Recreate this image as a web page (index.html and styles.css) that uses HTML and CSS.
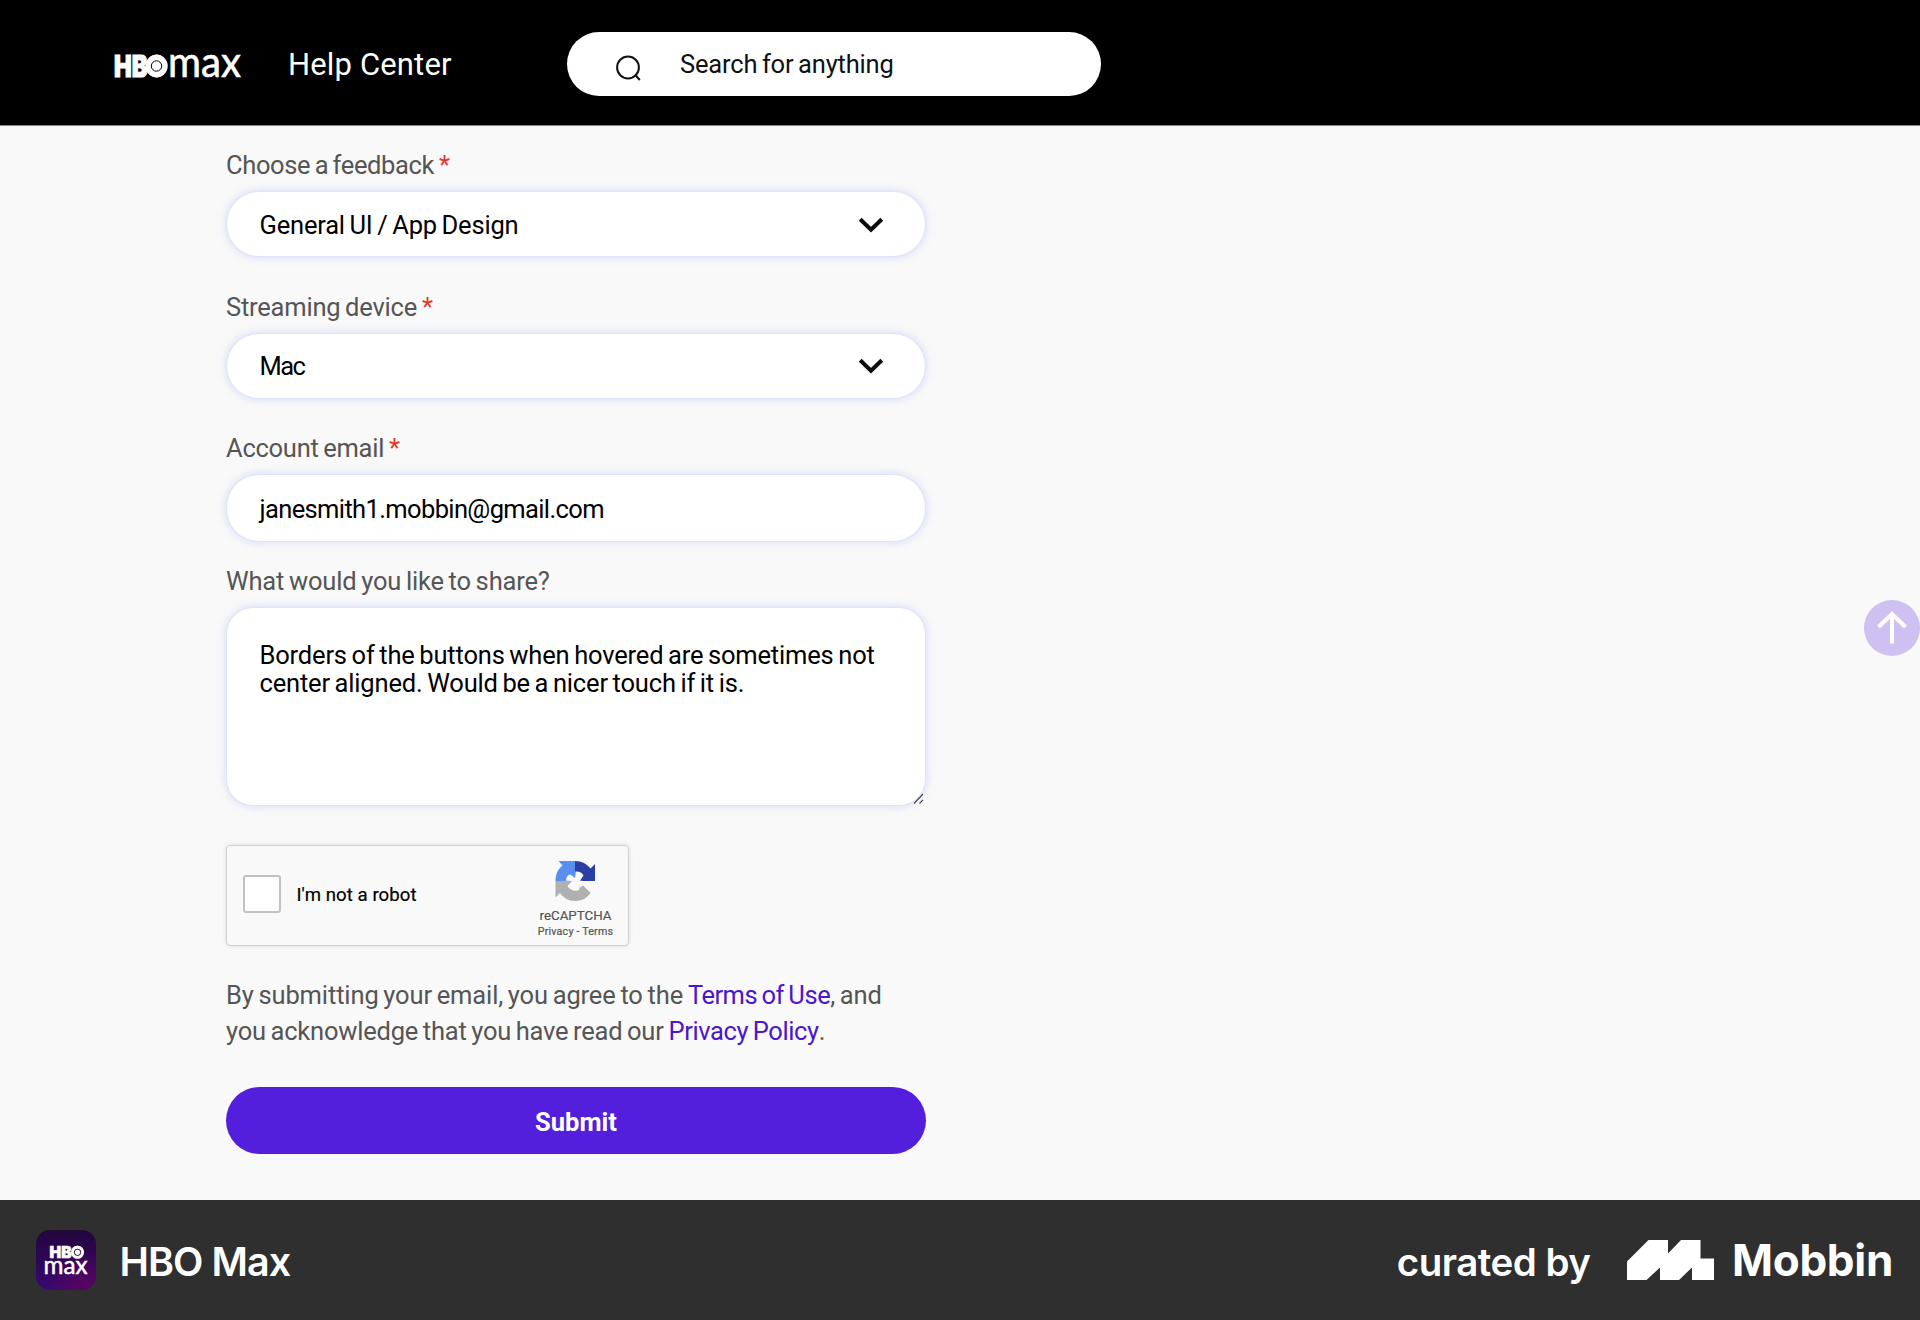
FILE: index.html
```html
<!DOCTYPE html>
<html lang="en">
<head>
<meta charset="utf-8">
<title>Help Center</title>
<link rel="stylesheet" href="styles.css">
</head>
<body>
<header class="header">
  <svg class="brand" viewBox="0 0 130 24" role="img" aria-label="HBO Max">
    <text class="brand-hbo" x="0" y="22.6" textLength="52" lengthAdjust="spacingAndGlyphs">HBO</text>
    <circle cx="42.5" cy="12" r="11.2" fill="#fff"/>
    <circle cx="42.5" cy="12" r="5.2" fill="none" stroke="#000" stroke-width="1"/>
    <text class="brand-max" x="54" y="22.6" textLength="73" lengthAdjust="spacingAndGlyphs">max</text>
  </svg>
  <span class="title">Help Center</span>
  <div class="search">
    <svg class="search-icon" viewBox="0 0 28 28"><circle cx="13" cy="12.5" r="10.9"/><path d="M20.3 20l4.5 5"/></svg>
    <span class="search-text">Search for anything</span>
  </div>
</header>
<main class="content">
  <form class="form">
    <div class="group">
      <label class="label"><span class="label-feedback">Choose a feedback</span> <b class="req">*</b></label>
      <div class="field"><span class="value-feedback">General UI / App Design</span><svg class="chevron" viewBox="0 0 26 16"><path d="M2.2 2.2L13 12.8L23.8 2.2"/></svg></div>
    </div>
    <div class="group">
      <label class="label"><span class="label-device">Streaming device</span> <b class="req">*</b></label>
      <div class="field"><span class="value-device">Mac</span><svg class="chevron" viewBox="0 0 26 16"><path d="M2.2 2.2L13 12.8L23.8 2.2"/></svg></div>
    </div>
    <div class="group group-email">
      <label class="label"><span class="label-email">Account email</span> <b class="req">*</b></label>
      <div class="field field-email"><span class="value-email">janesmith1.mobbin@gmail.com</span></div>
    </div>
    <div class="group group-message">
      <label class="label"><span class="label-message">What would you like to share?</span></label>
      <div class="message">Borders of the buttons when hovered are sometimes not<br>center aligned. Would be a nicer touch if it is.
        <svg class="grip" viewBox="0 0 12 12"><path d="M1 10.5L10 1M6.500 10.500L10 6.800"/></svg>
      </div>
    </div>
    <div class="captcha">
      <i class="checkbox"></i>
      <span class="captcha-text">I'm not a robot</span>
      <div class="captcha-brand">
        <svg class="captcha-logo" viewBox="0 0 40 40">
          <path fill="#2a3fa5" d="M20 0C27 0 32 3 35.500 7.500L40 3V20H20Z"/>
          <path fill="#5a8ff0" d="M20 0H3.500L7.500 4.500C3 8 .5 13 .5 20H20Z"/>
          <path fill="#b0b0b0" d="M.5 20V36.500L5 32C8.500 37 14 40 20 40C27 40 32 37 35.500 32L27.500 24.500L20 20Z"/>
          <path fill="#f9f9f9" d="M11 19.800C11 16 13 13.800 15.500 13.500L20 17L20.500 10.500C24 10 27 11.500 28.500 14.500L25 19.800H40V31L28 24.500C27 27.500 23 30 19.500 29.800C16 29 13.500 27 12.500 25L17 20Z"/>
          <path fill="#2a3fa5" d="M27 20L40 7V20Z"/>
          <path fill="#b0b0b0" d="M24 27L28 24.500L35.500 32L29 36Z"/>
        </svg>
        <span class="captcha-name">reCAPTCHA</span>
        <span class="captcha-links">Privacy - Terms</span>
      </div>
    </div>
    <p class="legal"><span class="legal-agree">By submitting your email, you agree to the</span> <a class="link-terms">Terms of Use</a><span class="legal-and">, and</span><br><span class="legal-read">you acknowledge that you have read our</span> <a class="link-privacy">Privacy Policy</a>.</p>
    <div class="submit">Submit</div>
  </form>
</main>
<div class="to-top"><svg viewBox="0 0 56 56"><path d="M28 43.500V14M14.500 27L28 14L41.500 27"/></svg></div>
<footer class="footer">
  <svg class="app-icon" viewBox="0 0 60 60" role="img" aria-label="HBO Max">
    <defs>
      <linearGradient id="base" x1="0" y1="0" x2="0" y2="1"><stop offset="0" stop-color="#22063c"/><stop offset=".45" stop-color="#2d0553"/><stop offset="1" stop-color="#3a0874"/></linearGradient>
      <radialGradient id="glow" cx=".85" cy="1" r=".7"><stop offset="0" stop-color="#5a035f"/><stop offset="1" stop-color="#5a035f" stop-opacity="0"/></radialGradient>
    </defs>
    <rect width="60" height="60" rx="14" fill="url(#base)"/><rect width="60" height="60" rx="14" fill="url(#glow)"/>
    <text class="icon-hbo" x="13.500" y="28.300" textLength="34" lengthAdjust="spacingAndGlyphs">HBO</text>
    <circle cx="41.500" cy="22.300" r="6.500" fill="#fff"/><circle cx="41.500" cy="22.300" r="3.200" fill="none" stroke="#2d0553" stroke-width="1"/>
    <text class="icon-max" x="7.500" y="43.500" textLength="44" lengthAdjust="spacingAndGlyphs">max</text>
  </svg>
  <span class="app-name">HBO Max</span>
  <span class="curated">curated by</span>
  <svg class="mobbin-mark" viewBox="0 0 87 40"><path d="M0 21.500L21.500 0H41V13.500L54 0H73.500V18.500H87V40H65V27.500L52 40H33V27.500L19.500 40H0Z"/></svg>
  <span class="mobbin">Mobbin</span>
</footer>
</body>
</html>
```
FILE: styles.css
```css
* { box-sizing: border-box; }
body {
  margin: 0;
  width: 1920px;
  height: 1320px;
  overflow: hidden;
  display: flex;
  flex-direction: column;
  background: #f9f9f9;
  color: #000;
  font: 25.5px/36px Roboto, "Liberation Sans", sans-serif;
}
.header {
  height: 126px;
  flex: none;
  display: flex;
  align-items: flex-start;
  background: #000;
  border-bottom: 1px solid #8a8a8a;
  color: #fff;
}
.brand { width: 130px; height: 24px; margin: 54px 0 0 114px; overflow: visible; }
.brand-hbo { font: 900 30px Inter, sans-serif; fill: #fff; stroke: #fff; stroke-width: 1; }
.brand-max { font: 400 43px Lato, sans-serif; fill: #fff; stroke: #fff; stroke-width: .6; }
.title { width: 165px; margin: 45px 0 0 44px; font-size: 31px; line-height: 40px; letter-spacing: .15px; white-space: nowrap; }
.search {
  width: 534px;
  height: 64px;
  margin: 32px 0 0 114px;
  display: flex;
  background: #fff;
  border-radius: 32px;
  color: #111;
}
.search-icon { width: 28px; height: 28px; margin: 23px 0 0 48px; fill: none; stroke: #111; stroke-width: 2; }
.search-text { margin: 14px 0 0 37px; letter-spacing: -.18px; word-spacing: -1.5px; white-space: nowrap; }
.content { height: 1074px; flex: none; padding: 21px 0 0 226px; }
.form { width: 700px; word-spacing: -1.5px; }
.group { height: 141.5px; }
.group-email { height: 133px; }
.group-message { height: 282px; }
.label { display: block; height: 36px; margin-bottom: 8px; color: #555; white-space: nowrap; }
.label-feedback { letter-spacing: -.37px; }
.label-device { letter-spacing: -.2px; }
.label-email { letter-spacing: -.25px; }
.label-message { letter-spacing: -.15px; }
.value-feedback { letter-spacing: -.19px; }
.value-device { letter-spacing: -1.6px; }
.value-email { letter-spacing: -.63px; }
.req { font-weight: 400; color: #e5372c; }
.field {
  height: 66px;
  padding: 1px 41px 0 32.5px;
  display: flex;
  align-items: center;
  justify-content: space-between;
  background: #fff;
  border: 1px solid #dfe3fb;
  border-radius: 33px;
  box-shadow: 0 0 10px rgba(110, 130, 245, .27);
}
.field-email { height: 68px; }
.chevron { width: 26px; height: 16px; fill: none; stroke: #0c0c0c; stroke-width: 4; }
.message {
  position: relative;
  height: 199px;
  padding: 33px 0 0 32.5px;
  line-height: 28px;
  letter-spacing: -.17px;
  white-space: nowrap;
  background: #fff;
  border: 1px solid #dfe3fb;
  border-radius: 27px;
  box-shadow: 0 0 10px rgba(110, 130, 245, .27);
}
.grip { position: absolute; right: 0; bottom: 0; width: 12px; height: 12px; fill: none; stroke: #444; stroke-width: 1.1; }
.captcha {
  width: 403px;
  height: 101px;
  display: flex;
  align-items: center;
  word-spacing: 0;
  background: #f9f9f9;
  border: 1px solid #d0d0d0;
  border-radius: 4px;
  box-shadow: 0 0 5px rgba(0, 0, 0, .1);
}
.checkbox { width: 38px; height: 38px; margin: -3px 0 0 16px; background: #fff; border: 2px solid #c1c1c1; border-radius: 3px; }
.captcha-text { width: 239px; margin: -2px 0 0 15.5px; font-size: 18.6px; letter-spacing: .06px; -webkit-text-stroke: .2px #000; }
.captcha-brand { width: 80px; height: 100%; padding-top: 15px; display: flex; flex-direction: column; align-items: center; color: #555; }
.captcha-logo { width: 40px; height: 40px; margin-left: -1px; }
.captcha-name { margin-top: 6px; font-size: 13.3px; line-height: 18px; -webkit-text-stroke: .2px #555; }
.captcha-links { font-size: 10.7px; line-height: 13px; letter-spacing: .18px; white-space: nowrap; -webkit-text-stroke: .2px #555; }
.legal { margin: 31px 0 0; color: #555; white-space: nowrap; }
.legal a { color: #4c16cc; }
.legal-agree { letter-spacing: -.12px; }
.legal .link-terms { letter-spacing: -.47px; }
.legal-and { letter-spacing: -.1px; }
.legal-read { letter-spacing: -.2px; }
.legal .link-privacy { letter-spacing: -.37px; }
.submit {
  height: 67px;
  margin-top: 38px;
  padding-top: 2px;
  display: flex;
  align-items: center;
  justify-content: center;
  background: #531fdc;
  border-radius: 34px;
  color: #fff;
  font-weight: 700;
}
.to-top { position: absolute; left: 1864px; top: 600px; width: 56px; height: 56px; background: #cfc0f2; border-radius: 50%; }
.to-top svg { display: block; fill: none; stroke: #fff; stroke-width: 4; }
.footer { height: 120px; flex: none; display: flex; align-items: center; background: #2f2f2f; color: #fff; font-family: Inter, sans-serif; white-space: nowrap; }
.app-icon { width: 60px; height: 60px; margin-left: 36px; }
.icon-hbo { font: 900 16px Inter, sans-serif; fill: #fff; stroke: #fff; stroke-width: .6; }
.icon-max { font: 400 25px Lato, sans-serif; fill: #fff; stroke: #fff; stroke-width: .5; }
.app-name { margin: 3px auto 0 23.5px; font-size: 39.5px; font-weight: 600; letter-spacing: -.95px; }
.curated { margin: 3px 36.5px 0 0; font-size: 38.5px; font-weight: 600; letter-spacing: -.5px; }
.mobbin-mark { width: 87px; height: 40px; fill: #fff; margin-right: 18px; }
.mobbin { margin: 0 27px 0 0; font-size: 44px; font-weight: 700; letter-spacing: -.3px; }
```
